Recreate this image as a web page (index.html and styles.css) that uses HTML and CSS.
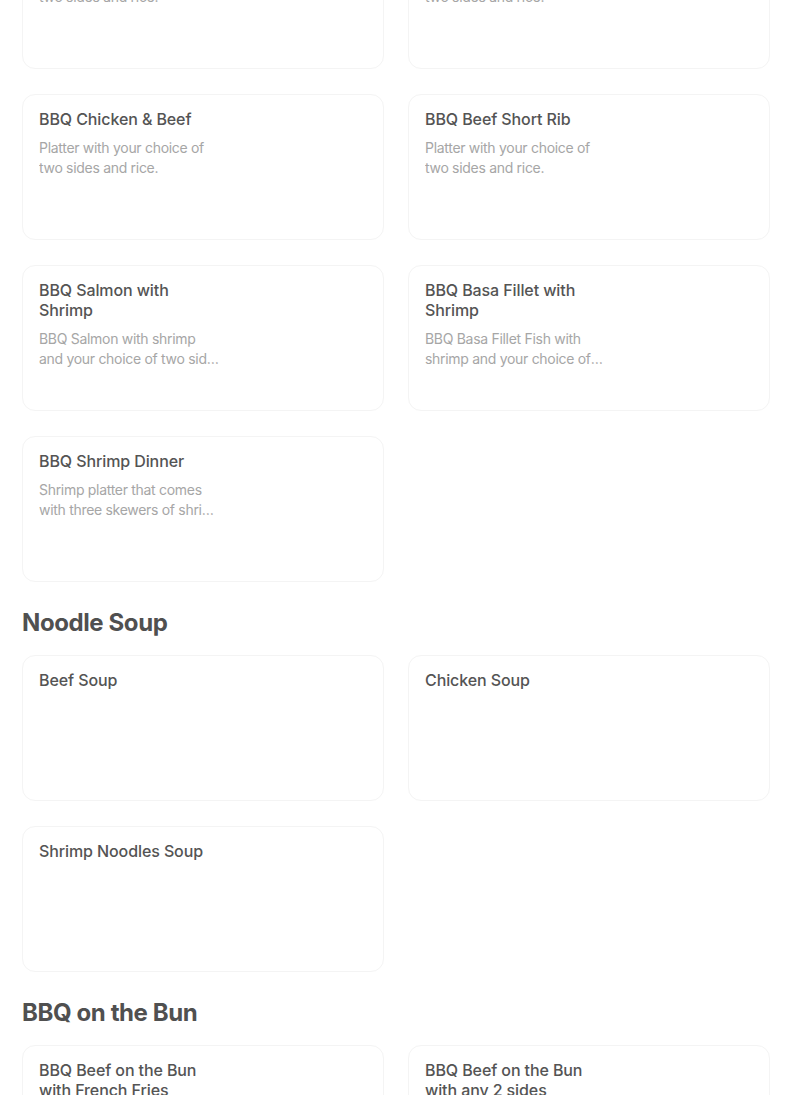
FILE: index.html
```html
<!DOCTYPE html>
<html lang="en">
  <head>
    <meta charset="UTF-8" />
    <meta name="viewport" content="width=device-width, initial-scale=1.0" />
    <title>Menu</title>
    <link rel="stylesheet" href="styles.css">
  </head>
  <body>
    <main>
      <section class="category">
        <div class="items scrolled">
          <div class="item">
            <div class="item-text">
              <h3>BBQ Chicken</h3>
              <p>Platter with your choice of two sides and rice.</p>
            </div>
          </div>
          <div class="item">
            <div class="item-text">
              <h3>BBQ Beef</h3>
              <p>Platter with your choice of two sides and rice.</p>
            </div>
          </div>
          <div class="item">
            <div class="item-text">
              <h3>BBQ Chicken &amp; Beef</h3>
              <p>Platter with your choice of two sides and rice.</p>
            </div>
          </div>
          <div class="item">
            <div class="item-text">
              <h3>BBQ Beef Short Rib</h3>
              <p>Platter with your choice of two sides and rice.</p>
            </div>
          </div>
          <div class="item">
            <div class="item-text">
              <h3>BBQ Salmon with Shrimp</h3>
              <p>BBQ Salmon with shrimp and your choice of two sides and rice.</p>
            </div>
          </div>
          <div class="item">
            <div class="item-text">
              <h3>BBQ Basa Fillet with Shrimp</h3>
              <p>BBQ Basa Fillet Fish with shrimp and your choice of two sides and rice.</p>
            </div>
          </div>
          <div class="item">
            <div class="item-text">
              <h3>BBQ Shrimp Dinner</h3>
              <p>Shrimp platter that comes with three skewers of shrimp and your choice of two sides.</p>
            </div>
          </div>
        </div>
      </section>

      <section class="category">
        <h2>Noodle Soup</h2>
        <div class="items">
          <div class="item">
            <div class="item-text">
              <h3>Beef Soup</h3>
            </div>
          </div>
          <div class="item">
            <div class="item-text">
              <h3>Chicken Soup</h3>
            </div>
          </div>
          <div class="item">
            <div class="item-text">
              <h3>Shrimp Noodles Soup</h3>
            </div>
          </div>
        </div>
      </section>

      <section class="category">
        <h2>BBQ on the Bun</h2>
        <div class="items">
          <div class="item">
            <div class="item-text">
              <h3>BBQ Beef on the Bun with French Fries</h3>
            </div>
          </div>
          <div class="item">
            <div class="item-text">
              <h3>BBQ Beef on the Bun with any 2 sides</h3>
            </div>
          </div>
        </div>
      </section>
    </main>
  </body>
</html>
```

FILE: styles.css
```css
body {
  margin: 0;
  background: #fff;
  font-family: Inter, "Noto Sans", sans-serif;
  color: #545454;
  overflow: hidden;
}

main {
  width: 748px;
  padding: 0 22px;
}

.category h2 {
  margin: 27px 0 18px;
  font-size: 24px;
  line-height: 28px;
  font-weight: 700;
  letter-spacing: -0.4px;
  color: #505050;
}

.items {
  display: grid;
  grid-template-columns: 1fr 1fr;
  column-gap: 24px;
  row-gap: 25px;
}

.items.scrolled {
  margin-top: -77px;
}

.item {
  height: 146px;
  box-sizing: border-box;
  border: 1px solid #f4f4f4;
  border-radius: 13px;
  background: #fff;
  padding: 14px 16px;
}

.item-text {
  width: 183px;
}

.item h3 {
  margin: 0;
  font-size: 16px;
  line-height: 20px;
  font-weight: 500;
  letter-spacing: -0.1px;
  color: #545454;
}

.item p {
  margin: 9px 0 0;
  font-size: 14px;
  line-height: 20px;
  letter-spacing: -0.3px;
  color: #a6a6a6;
  display: -webkit-box;
  -webkit-line-clamp: 2;
  -webkit-box-orient: vertical;
  overflow: hidden;
}
```
